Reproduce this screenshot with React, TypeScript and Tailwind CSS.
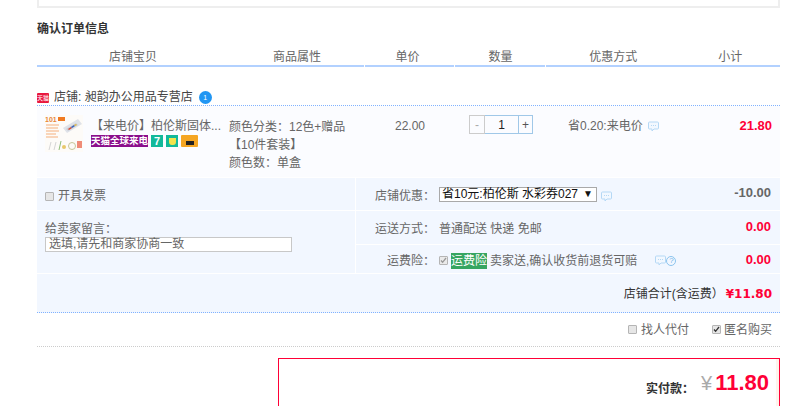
const cjk = "font-['Liberation_Sans','Noto_Sans_CJK_SC',sans-serif]"

function Bubble() {
  return (
    <svg width="11" height="11" viewBox="0 0 11 11" className="shrink-0">
      <path d="M1.5 1h8a1 1 0 0 1 1 1v5a1 1 0 0 1-1 1H6L4 10V8H1.5a1 1 0 0 1-1-1V2a1 1 0 0 1 1-1z" fill="#f2f8ff" stroke="#b5d8f5" />
      <path d="M3 4.5h1M5 4.5h1M7 4.5h1" stroke="#b5d8f5" />
    </svg>
  )
}

function Check({ checked, faded }: { checked?: boolean; faded?: boolean }) {
  return (
    <span className={`flex h-[9px] w-[9px] shrink-0 items-center justify-center rounded-[1px] border border-[#b5b5b5] ${faded ? "bg-[#eaeaea]" : "bg-[#e6e6e6]"}`}>
      {checked && (
        <svg width="7" height="7" viewBox="0 0 7 7" className="shrink-0">
          <path d="M1 3.5l1.6 1.8L6 1" fill="none" stroke={faded ? "#999" : "#333"} strokeWidth="1.3" />
        </svg>
      )}
    </span>
  )
}

function Thumb() {
  return (
    <svg width="38" height="37" viewBox="0 0 38 37" className="shrink-0">
      <rect width="38" height="37" fill="#fdfbf8" />
      <text x="0" y="7" fontSize="7" fontWeight="700" fill="#e8873a" fontFamily="Liberation Sans">101</text>
      <rect x="13" y="2" width="7" height="4" fill="#f07a22" />
      <path d="M1 10h13M1 13h12M1 16h13M1 19h10M1 22h12" stroke="#f7c9a5" strokeWidth="1.4" />
      <path d="M18 13l15-9 4 5-15 9z" fill="#dfe2e8" />
      <path d="M21 14l10-6 2 2-10 6z" fill="#c9cdd6" />
      <path d="M23 14l3-2 1 1-3 2z" fill="#d7472f" />
      <path d="M26 12l3-2 1 1-3 2z" fill="#3a62b8" />
      <path d="M29 10l2-1 1 1-2 1z" fill="#e3b83c" />
      <path d="M4 35l2-8M9 35l2-8" stroke="#d5d5d5" />
      <path d="M14 35l2-9" stroke="#8fbf7a" />
      <circle cx="19" cy="32" r="2" fill="#e8c86a" />
      <circle cx="27" cy="31" r="3.5" fill="none" stroke="#c7c79a" />
      <rect x="32" y="26" width="5" height="7" fill="#ef8c78" />
    </svg>
  )
}

function Badges() {
  return (
    <div className="mt-[1px] flex items-center gap-[3px]">
      <span className="flex h-[12px] w-[57px] items-center justify-center bg-[#8b0f8c] text-[9.5px] font-bold leading-none whitespace-nowrap text-white">天猫全球来电</span>
      <span className="flex h-[12px] w-[12px] items-center justify-center bg-[#12b99a] text-[11px] font-bold leading-none text-white">7</span>
      <span className="flex h-[12px] w-[12px] items-center justify-center bg-[#12b99a]">
        <span className="h-[7px] w-[7px] rounded-b-[3px] bg-[#f2e34c]" />
      </span>
      <span className="flex h-[12px] w-[17px] flex-col justify-end rounded-[1px] bg-[#f5a623]">
        <span className="mx-auto mb-[2px] h-[4px] w-[8px] bg-[#222]" />
      </span>
    </div>
  )
}

export default function App() {
  return (
    <div className={`h-[406px] w-[807px] overflow-hidden bg-white pl-[37px] text-[12px] leading-[16px] text-[#666] ${cjk}`}>
      <div className="w-[743px]">
        <div className="h-[8px] border-x-2 border-b-2 border-[#eee]" />

        <h2 className="mt-[13px] h-[16px] text-[12px] font-bold leading-[16px] text-[#333]">确认订单信息</h2>

        <div className="mt-[6px] flex h-[24px]">
          <div className="flex w-[327px] border-b-2 border-[#b2d1ff] pt-[6px]">
            <span className="ml-[72px] w-[164px]">店铺宝贝</span>
            <span>商品属性</span>
          </div>
          <div className="ml-[1px] w-[90px] border-b-2 border-[#b2d1ff] pt-[6px] pl-[31px]">单价</div>
          <div className="ml-[1px] w-[90px] border-b-2 border-[#b2d1ff] pt-[6px] pl-[33px]">数量</div>
          <div className="ml-[1px] w-[234px] border-b-2 border-[#b2d1ff] pt-[6px]">
            <div className="flex">
              <span className="ml-[43px] w-[129px]">优惠方式</span>
              <span>小计</span>
            </div>
          </div>
        </div>

        <div className="flex h-[39px] items-end gap-[5px] border-b border-dotted border-[#80b2ff] text-[#444]">
          <span className="mb-[2px] flex h-[10px] w-[12px] items-center justify-center rounded-[1px] bg-[#e8173d] text-[6px] leading-none text-white">天猫</span>
          <span>店铺: 昶韵办公用品专营店</span>
          <span className="mb-[1px] ml-[1px] flex h-[13px] w-[13px] items-center justify-center rounded-full bg-[#2196f3] text-[7px] leading-none text-white">1</span>
        </div>

        <div className="flex h-[71px] bg-[#fbfcff] pt-[9px]">
          <div className="ml-[8px]"><Thumb /></div>
          <div className="ml-[8px] w-[138px] pt-[3px]">
            <div className="whitespace-nowrap">【来电价】柏伦斯固体...</div>
            <Badges />
          </div>
          <div className="w-[166px] pt-[3px] leading-[18px]">
            <div className="whitespace-nowrap">颜色分类：12色+赠品</div>
            <div>【10件套装】</div>
            <div>颜色数：单盒</div>
          </div>
          <div className="w-[74px] pt-[3px]">22.00</div>
          <div className="flex h-[19px] w-[99px]">
            <span className="flex w-[16px] items-center justify-center border border-[#ccc] text-[#aaa]">-</span>
            <span className="flex w-[33px] items-center justify-center border-y border-[#a0c8e8] text-[#222]">1</span>
            <span className="flex w-[15px] items-center justify-center border border-[#a0c8e8] text-[#555]">+</span>
          </div>
          <div className="flex h-[19px] w-[170px] items-center gap-[5px] pt-[3px]">
            <span className="whitespace-nowrap">省0.20:来电价</span>
            <Bubble />
          </div>
          <div className="w-[34px] whitespace-nowrap pt-[3px] text-right text-[13px] font-bold text-[#ff0036]">21.80</div>
        </div>

        <div className="flex h-[96px] bg-[#f2f7ff]">
          <div className="w-[318px] shrink-0">
            <div className="flex h-[33px] items-center gap-[4px] border-t border-white pt-[4px] pl-[8px]">
              <Check />
              <span>开具发票</span>
            </div>
            <div className="h-[63px] border-t border-white pt-[11px] pl-[8px]">
              <div className="leading-[15px]">给卖家留言：</div>
              <div className="h-[15px] w-[247px] border border-[#c8c8c8] bg-white pl-[3px] text-[12px] leading-[13px] whitespace-nowrap">选填,请先和商家协商一致</div>
            </div>
          </div>
          <div className="flex-1 border-l border-white">
            <div className="flex h-[33px] items-center border-t border-white pt-[4px]">
              <span className="w-[83px] pr-[4px] text-right">店铺优惠：</span>
              <div className="mb-[4px] flex h-[15px] w-[158px] items-center justify-between border border-[#a9a9a9] bg-white pr-[3px] pl-[2px] text-[#111]">
                <span className="whitespace-nowrap">省10元:柏伦斯 水彩券027</span>
                <span className="text-[10px] leading-none">▼</span>
              </div>
              <span className="ml-[4px]"><Bubble /></span>
              <span className="mr-[9px] mb-[6px] ml-auto text-[13px] font-bold text-[#666]">-10.00</span>
            </div>
            <div className="flex h-[34px] items-center border-t border-white pt-[2px]">
              <span className="w-[83px] pr-[4px] text-right">运送方式：</span>
              <span>普通配送 快递 免邮</span>
              <span className="mr-[9px] mb-[4px] ml-auto text-[13px] font-bold text-[#ff0036]">0.00</span>
            </div>
            <div className="flex h-[29px] items-center border-t border-white pt-[3px]">
              <span className="w-[83px] pr-[4px] text-right">运费险：</span>
              <Check checked faded />
              <span className="ml-[3px] bg-[#36a561] text-white">运费险</span>
              <span className="ml-[3px] whitespace-nowrap">卖家送,确认收货前退货可赔</span>
              <span className="ml-[18px]"><Bubble /></span>
              <span className="flex h-[10px] w-[10px] items-center justify-center rounded-full border border-[#8cc4ee] text-[8px] leading-none text-[#6fb4e8]">?</span>
              <span className="mr-[9px] mb-[2px] ml-auto text-[13px] font-bold text-[#ff0036]">0.00</span>
            </div>
          </div>
        </div>

        <div className="mt-[1px] flex h-[39px] items-center justify-end border-b border-dotted border-[#80b2ff] bg-[#f2f7ff] pt-[2px] pr-[8px] text-[#333]">
          <span>店铺合计(含运费）</span>
          <span className="ml-[2px] font-['DejaVu_Sans',sans-serif] text-[12px] font-bold text-[#ff0036]">¥11.80</span>
        </div>

        <div className="flex h-[34px] items-center justify-end gap-[23px] border-b border-dotted border-[#ccc] pr-[8px]">
          <div className="flex items-center gap-[4px]">
            <Check />
            <span>找人代付</span>
          </div>
          <div className="flex items-center gap-[3px]">
            <Check checked />
            <span>匿名购买</span>
          </div>
        </div>

        <div className="mt-[11px] ml-[241px] flex h-[60px] items-start justify-end border border-[#ff0036] pt-[12px] pr-[10px] shadow-[inset_-3px_0_0_#fff3ec]">
          <span className="mt-[10px] mr-[7px] font-bold text-[#333]">实付款：</span>
          <span className="text-[20px] leading-[24px] text-[#aaa]">¥</span>
          <span className="ml-[3px] text-[22px] font-bold leading-[24px] text-[#ff0036]">11.80</span>
        </div>
      </div>
    </div>
  )
}
